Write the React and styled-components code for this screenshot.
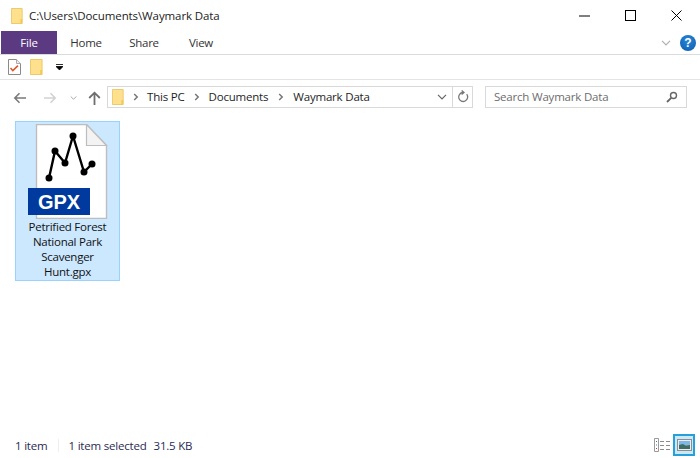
import React from 'react';
import styled, { createGlobalStyle } from 'styled-components';

const GlobalStyle = createGlobalStyle`
  html, body {
    margin: 0;
    padding: 0;
    background: #fff;
  }
  body {
    font-family: "Open Sans", "Noto Sans", "Liberation Sans", sans-serif;
    font-size: 12px;
    color: #1e1e1e;
  }
`;

const Window = styled.div`
  width: 700px;
  height: 458px;
  display: flex;
  flex-direction: column;
  overflow: hidden;
  background: #fff;
`;

const TitleBar = styled.div`
  height: 31px;
  display: flex;
  align-items: center;
  padding: 0 1px 0 11px;
`;

const TitleText = styled.div`
  flex: 1;
  margin-left: 6px;
  font-size: 11.5px;
  letter-spacing: -0.1px;
  color: #222;
`;

const WinButton = styled.div`
  width: 46px;
  height: 31px;
  display: flex;
  align-items: center;
  justify-content: center;
`;

const RibbonTabs = styled.div`
  height: 23px;
  display: flex;
  align-items: stretch;
  padding-left: 1px;
  border-bottom: 1px solid #dadbdc;
`;

const FileTab = styled.div`
  width: 56px;
  background: #5b3a82;
  color: #fff;
  display: flex;
  align-items: center;
  justify-content: center;
  font-size: 11.5px;
  letter-spacing: -0.2px;
`;

const Tab = styled.div`
  width: ${(p) => p.$w}px;
  display: flex;
  align-items: center;
  justify-content: center;
  font-size: 11.5px;
  letter-spacing: -0.3px;
  color: #333;
`;

const RibbonEnd = styled.div`
  margin-left: auto;
  display: flex;
  align-items: center;
  gap: 9px;
  padding-right: 4px;
`;

const HelpBadge = styled.div`
  width: 16px;
  height: 16px;
  border-radius: 50%;
  background: radial-gradient(circle at 50% 35%, #2a86d8, #0b5cad);
  color: #fff;
  font-family: "Liberation Sans", sans-serif;
  font-weight: bold;
  font-size: 12px;
  line-height: 16px;
  text-align: center;
`;

const QuickBar = styled.div`
  height: 24px;
  display: flex;
  align-items: center;
  padding-left: 8px;
  border-bottom: 1px solid #e4e4e4;
`;

const NavRow = styled.div`
  height: 35px;
  display: flex;
  align-items: center;
  padding-left: 13px;
`;

const NavButtons = styled.div`
  width: 94px;
  display: flex;
  align-items: center;
`;

const NavButton = styled.div`
  width: ${(p) => p.$w}px;
  margin-left: ${(p) => p.$ml || 0}px;
  display: flex;
  align-items: center;
  justify-content: center;
`;

const AddressBox = styled.div`
  width: 364px;
  height: 20px;
  border: 1px solid #d9d9d9;
  display: flex;
  align-items: center;
  margin-top: -2px;
`;

const Crumbs = styled.div`
  flex: 1;
  display: flex;
  align-items: center;
  padding-left: 4px;
  font-size: 11.5px;
  letter-spacing: -0.2px;
  color: #1e1e1e;
`;

const Crumb = styled.span`
  white-space: nowrap;
`;

const Chevron = styled.span`
  display: inline-flex;
  width: ${(p) => p.$w}px;
  justify-content: center;
`;

const AddressButton = styled.div`
  width: ${(p) => p.$w}px;
  height: 100%;
  display: flex;
  align-items: center;
  justify-content: center;
  border-left: ${(p) => (p.$split ? '1px solid #d9d9d9' : 'none')};
`;

const SearchBox = styled.div`
  width: 202px;
  height: 22px;
  margin-left: 12px;
  margin-top: -2px;
  border: 1px solid #d9d9d9;
  display: flex;
  align-items: center;
  justify-content: space-between;
  padding: 0 8px;
  box-sizing: border-box;
  font-size: 11.5px;
  letter-spacing: -0.2px;
  color: #6d6d6d;
`;

const Content = styled.div`
  flex: 1;
  padding: 6px 15px;
`;

const FileTile = styled.div`
  width: 103px;
  height: 158px;
  border: 1px solid #99d1ff;
  background: #cce8ff;
  display: flex;
  flex-direction: column;
  align-items: center;
`;

const IconSlot = styled.div`
  margin-top: 2px;
  height: 95px;
`;

const FileName = styled.div`
  width: 100%;
  text-align: center;
  font-size: 11.5px;
  line-height: 15px;
  letter-spacing: -0.25px;
  color: #111;
`;

const StatusBar = styled.div`
  height: 24px;
  display: flex;
  align-items: center;
  padding: 0 5px 2px 15px;
  box-sizing: border-box;
  font-size: 11.5px;
  letter-spacing: -0.2px;
  color: #2a2a52;
`;

const StatusDivider = styled.div`
  width: 1px;
  height: 13px;
  background: #eeeeee;
  margin: 0 9px 0 11px;
`;

const Size = styled.span`
  margin-left: 7px;
`;

const ViewToggles = styled.div`
  margin-left: auto;
  display: flex;
  align-items: center;
`;

const ViewButton = styled.div`
  width: 22px;
  height: 22px;
  box-sizing: border-box;
  display: flex;
  align-items: center;
  justify-content: center;
  border: ${(p) => (p.$active ? '2px solid #26a0da' : '2px solid transparent')};
  background: ${(p) => (p.$active ? '#cbe8f6' : 'transparent')};
`;

const FolderIcon = ({ size = 12, height = 16 }) => (
  <svg width={size} height={height} viewBox="0 0 14 16" preserveAspectRatio="none">
    <path d="M.5.5h12.5v15H.5z" fill="#ffe08c" stroke="#eac767" />
    <path d="M11 11h2v4.5h-2z" fill="#f4c94f" />
  </svg>
);

const ChevronIcon = ({ color = '#777' }) => (
  <svg width="6" height="8" viewBox="0 0 6 8">
    <path d="M1.2 1l3 3-3 3" fill="none" stroke={color} strokeWidth="1.5" />
  </svg>
);

const DownIcon = ({ color = '#666', w = 10 }) => (
  <svg width={w} height="6" viewBox="0 0 10 6">
    <path d="M1 .8l4 4 4-4" fill="none" stroke={color} strokeWidth="1.2" />
  </svg>
);

const ArrowLeft = ({ color }) => (
  <svg width="14" height="12" viewBox="0 0 14 12">
    <path d="M13 6H2M6.5 1.2L1.8 6l4.7 4.8" fill="none" stroke={color} strokeWidth="1.6" />
  </svg>
);

const ArrowRight = ({ color }) => (
  <svg width="14" height="12" viewBox="0 0 14 12">
    <path d="M1 6h11M7.5 1.2L12.2 6l-4.7 4.8" fill="none" stroke={color} strokeWidth="1.6" />
  </svg>
);

const ArrowUp = () => (
  <svg width="13" height="14" viewBox="0 0 13 14">
    <path d="M6.5 14V2M1.2 7l5.3-5.3L11.8 7" fill="none" stroke="#6e6e6e" strokeWidth="1.8" />
  </svg>
);

const ChecklistIcon = () => (
  <svg width="13" height="16" viewBox="0 0 13 16">
    <path d="M.5.5h8l4 4v11H.5z" fill="#fff" stroke="#8a8a8a" />
    <path d="M8.5.5v4h4" fill="#eee" stroke="#aaa" />
    <path d="M2.5 9l2.3 2.6L10 6.6" fill="none" stroke="#e0562a" strokeWidth="1.5" />
  </svg>
);

const trackPoints = [
  [22, 54],
  [28, 27],
  [38, 39],
  [46, 12],
  [57, 48],
  [65, 40],
];

const GpxIcon = () => (
  <svg width="82" height="95" viewBox="0 0 82 95" display="block">
    <path d="M9.5.5h50l20 21v73h-70z" fill="#fff" stroke="#bdbdbd" strokeWidth="1.4" />
    <path d="M59.5.5v21h20z" fill="#f3f3f3" stroke="#bdbdbd" strokeWidth="1.2" />
    <path
      d={`M${trackPoints.map((pt) => pt.join(' ')).join('L')}`}
      fill="none"
      stroke="#000"
      strokeWidth="2.4"
      strokeLinejoin="round"
    />
    {trackPoints.map(([x, y]) => (
      <circle key={x} cx={x} cy={y} r="3.5" />
    ))}
    <rect x="1" y="64" width="62" height="27" fill="#003a9e" />
    <text
      x="32"
      y="85"
      textAnchor="middle"
      fill="#fff"
      fontFamily="Liberation Sans, sans-serif"
      fontWeight="bold"
      fontSize="20"
    >
      GPX
    </text>
  </svg>
);

const DetailsIcon = () => (
  <svg width="17" height="14" viewBox="0 0 17 14">
    <path d="M.5.5h4v13h-4z" fill="#fff" stroke="#9a9a9a" />
    <path d="M2 3h1v1H2z" fill="#666" />
    <path d="M2 6.5h1v1H2z" fill="#4a7fcf" />
    <path d="M2 10h1v1H2z" fill="#d03030" />
    <path d="M6 3.5h4M12 3.5h4M6 7.5h4M12 7.5h4M6 11.5h4M12 11.5h4" stroke="#8c8c8c" />
  </svg>
);

const TilesIcon = () => (
  <svg width="15" height="12" viewBox="0 0 15 12">
    <rect x=".5" y=".5" width="14" height="11" fill="#eee" stroke="#8d8d8d" />
    <rect x="2" y="2" width="11" height="4" fill="#7db7e8" />
    <rect x="2" y="6" width="11" height="4" fill="#7f9e86" />
    <path d="M2 6l4-1 3 2 4-1v4H2z" fill="#3f6c63" />
  </svg>
);

const SearchIcon = () => (
  <svg width="12" height="12" viewBox="0 0 12 12">
    <circle cx="7.5" cy="4.5" r="3" fill="none" stroke="#666" strokeWidth="1.4" />
    <path d="M5.2 6.8L1 11" stroke="#666" strokeWidth="1.8" />
  </svg>
);

const RefreshIcon = () => (
  <svg width="12" height="13" viewBox="0 0 12 13">
    <path d="M9.7 4.2a4.5 4.5 0 1 1-3.7-1.7" fill="none" stroke="#777" strokeWidth="1.3" />
    <path d="M4.6.5L7 2.5 4.6 4.6" fill="none" stroke="#777" strokeWidth="1.3" />
  </svg>
);

const App = () => (
  <Window>
    <GlobalStyle />
    <TitleBar>
      <FolderIcon />
      <TitleText>C:\Users\Documents\Waymark Data</TitleText>
      <WinButton>
        <svg width="11" height="2" viewBox="0 0 11 2"><path d="M0 1h11" stroke="#000" /></svg>
      </WinButton>
      <WinButton>
        <svg width="11" height="11" viewBox="0 0 11 11"><rect x=".5" y=".5" width="10" height="10" fill="none" stroke="#000" /></svg>
      </WinButton>
      <WinButton>
        <svg width="11" height="11" viewBox="0 0 11 11"><path d="M.5.5l10 10M10.5.5l-10 10" stroke="#000" /></svg>
      </WinButton>
    </TitleBar>
    <RibbonTabs>
      <FileTab>File</FileTab>
      <Tab $w={58}>Home</Tab>
      <Tab $w={58}>Share</Tab>
      <Tab $w={56}>View</Tab>
      <RibbonEnd>
        <DownIcon color="#b0b0b0" />
        <HelpBadge>?</HelpBadge>
      </RibbonEnd>
    </RibbonTabs>
    <QuickBar>
      <ChecklistIcon />
      <NavButton $w={31}><FolderIcon size={13} /></NavButton>
      <NavButton $w={14}>
        <svg width="7" height="6" viewBox="0 0 7 6"><path d="M0 .5h7M0 2.5h7L3.5 6z" stroke="#000" strokeWidth=".8" /></svg>
      </NavButton>
    </QuickBar>
    <NavRow>
      <NavButtons>
        <NavButton $w={14}><ArrowLeft color="#7a7a7a" /></NavButton>
        <NavButton $w={14} $ml={16}><ArrowRight color="#d2d2d2" /></NavButton>
        <NavButton $w={10} $ml={11}><DownIcon color="#999" w={7} /></NavButton>
        <NavButton $w={14} $ml={9}><ArrowUp /></NavButton>
      </NavButtons>
      <AddressBox>
        <Crumbs>
          <FolderIcon />
          <Chevron $w={23}><ChevronIcon /></Chevron>
          <Crumb>This PC</Crumb>
          <Chevron $w={24}><ChevronIcon /></Chevron>
          <Crumb>Documents</Crumb>
          <Chevron $w={25}><ChevronIcon /></Chevron>
          <Crumb>Waymark Data</Crumb>
        </Crumbs>
        <AddressButton $w={20}><DownIcon /></AddressButton>
        <AddressButton $w={19} $split><RefreshIcon /></AddressButton>
      </AddressBox>
      <SearchBox>
        <span>Search Waymark Data</span>
        <SearchIcon />
      </SearchBox>
    </NavRow>
    <Content>
      <FileTile>
        <IconSlot><GpxIcon /></IconSlot>
        <FileName>
          Petrified Forest
          <br />
          National Park
          <br />
          Scavenger
          <br />
          Hunt.gpx
        </FileName>
      </FileTile>
    </Content>
    <StatusBar>
      <span>1 item</span>
      <StatusDivider />
      <span>1 item selected</span>
      <Size>31.5 KB</Size>
      <ViewToggles>
        <ViewButton><DetailsIcon /></ViewButton>
        <ViewButton $active><TilesIcon /></ViewButton>
      </ViewToggles>
    </StatusBar>
  </Window>
);

export default App;
